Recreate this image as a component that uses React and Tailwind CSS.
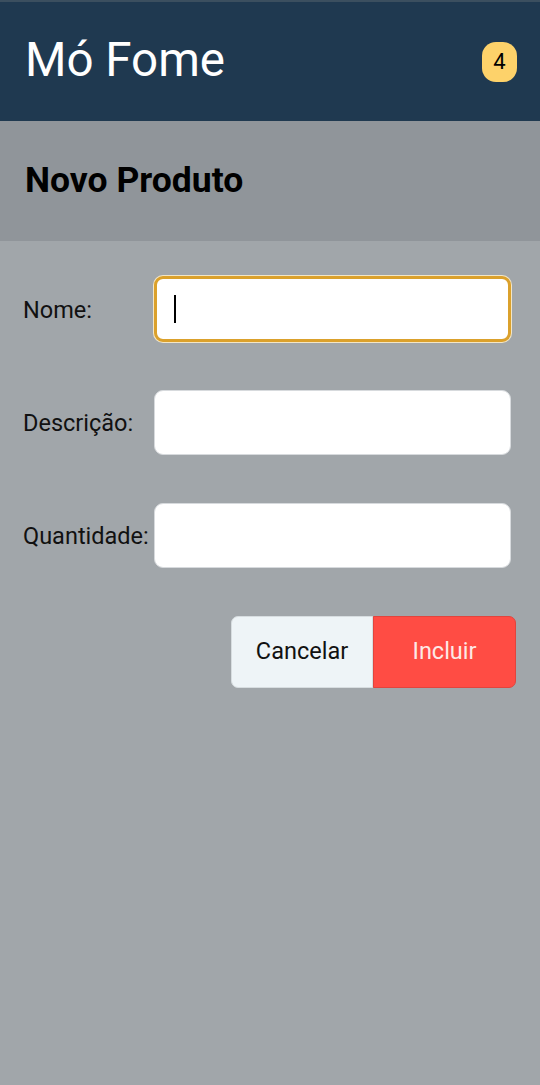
export default function App() {
  const font = { fontFamily: 'Roboto, "Noto Sans", sans-serif' };
  return (
    <div className="w-[540px] h-[1085px] flex flex-col bg-[#a1a6aa]" style={font}>
      <div className="h-[2px] bg-[#3b4f5f]" />
      <header className="h-[119px] bg-[#1f3950] flex items-center justify-between pl-[25px] pr-[23px]">
        <h1 className="text-[47.5px] leading-none text-white font-normal pb-[1px]">Mó Fome</h1>
        <span className="w-[35px] h-[40px] rounded-[14px] bg-[#fdd26a] flex items-center justify-center text-[22px] text-black">4</span>
      </header>
      <div className="h-[120px] bg-[#90959a] flex items-center pl-[25px]">
        <h2 className="text-[35.5px] font-bold text-black leading-none">Novo Produto</h2>
      </div>
      <form className="flex flex-col pl-[23px] pr-[29px] pt-[35px]">
        <div className="flex items-center h-[66px]">
          <label className="w-[131px] pt-[3px] text-[23.5px] text-[#111]">Nome:</label>
          <div className="flex-1 h-[66px] rounded-[9px] bg-white border-[3px] border-[#dba12c] ring-1 ring-[#f3e6c6] flex items-center pl-[17px]">
            <span className="w-[2px] h-[28px] bg-black" />
          </div>
        </div>
        <div className="flex items-center h-[66px] mt-[47px]">
          <label className="w-[131px] pt-[3px] text-[23.5px] text-[#111]">Descrição:</label>
          <div className="flex-1 h-[65px] rounded-[9px] bg-white border border-[#d7dadd]" />
        </div>
        <div className="flex items-center h-[66px] mt-[47px]">
          <label className="w-[131px] pt-[3px] text-[23.5px] text-[#111] whitespace-nowrap">Quantidade:</label>
          <div className="flex-1 h-[65px] rounded-[9px] bg-white border border-[#d7dadd]" />
        </div>
        <div className="flex justify-end mt-[48px] mr-[-5px]">
          <button type="button" className="w-[142px] h-[72px] bg-[#eef4f7] rounded-l-[7px] text-[23.5px] text-[#111] border border-[#d7dde0]">Cancelar</button>
          <button type="button" className="w-[143px] h-[72px] bg-[#ff4c44] rounded-r-[7px] text-[23.5px] text-[#fde9e6] border border-[#e2443d]">Incluir</button>
        </div>
      </form>
    </div>
  );
}
